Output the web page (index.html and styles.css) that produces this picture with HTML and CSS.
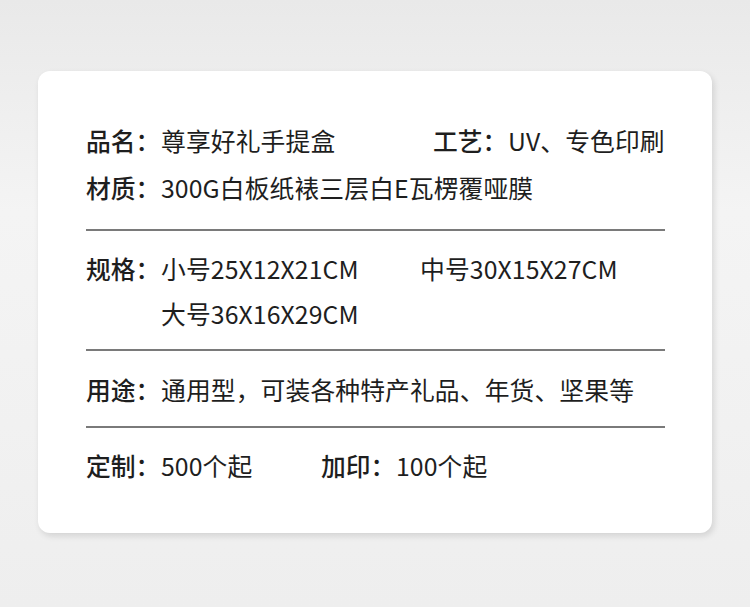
FILE: index.html
```html
<!DOCTYPE html>
<html lang="zh">
<head>
<meta charset="utf-8">
<link rel="stylesheet" href="styles.css">
</head>
<body>
<div class="card">
  <section class="sec sec1">
    <div class="row">
      <div class="item w-name"><span class="lbl">品名：</span><span class="val">尊享好礼手提盒</span></div>
      <div class="item"><span class="lbl">工艺：</span><span class="val">UV、专色印刷</span></div>
    </div>
    <div class="row">
      <div class="item"><span class="lbl">材质：</span><span class="val">300G白板纸裱三层白E瓦楞覆哑膜</span></div>
    </div>
  </section>
  <section class="sec sec2">
    <div class="row">
      <span class="lbl">规格：</span>
      <div class="vals">
        <div class="line"><span class="val w-size">小号25X12X21CM</span><span class="val">中号30X15X27CM</span></div>
        <div class="line"><span class="val">大号36X16X29CM</span></div>
      </div>
    </div>
  </section>
  <section class="sec sec3">
    <div class="row">
      <div class="item"><span class="lbl">用途：</span><span class="val">通用型，可装各种特产礼品、年货、坚果等</span></div>
    </div>
  </section>
  <section class="sec sec4">
    <div class="row">
      <div class="item w-order"><span class="lbl">定制：</span><span class="val">500个起</span></div>
      <div class="item"><span class="lbl">加印：</span><span class="val">100个起</span></div>
    </div>
  </section>
</div>
</body>
</html>
```
FILE: styles.css
```css
* { box-sizing: border-box; }
html, body { margin: 0; padding: 0; }
body {
  width: 750px;
  height: 607px;
  overflow: hidden;
  background: linear-gradient(180deg, #e9e9e9 0%, #f4f4f4 35%, #f1f1f1 70%, #eeeeee 100%);
  font-family: "Noto Sans CJK SC", "Noto Sans", sans-serif;
  color: #1e1e1e;
  padding-top: 71px;
  padding-left: 38px;
}
.card {
  width: 674px;
  height: 462px;
  background: #fff;
  border-radius: 12px;
  box-shadow: 2px 3px 6px rgba(0,0,0,0.12);
  padding: 0 47px 0 48px;
}
.sec { border-bottom: 2px solid #7a7a7a; }
.sec4 { border-bottom: none; }
.sec1 { padding: 46px 0 19px; }
.sec2 { padding: 14px 0 13px; }
.sec3 { padding: 15px 0 14px; }
.sec4 { padding: 14px 0 0; }
.sec1 .row + .row { margin-top: 1px; }
.row { display: flex; font-size: 24.8px; line-height: 46px; }
.item { display: flex; white-space: nowrap; }
.lbl { display: inline-block; width: 75px; font-weight: 500; flex: none; white-space: nowrap; }
.val { font-weight: 400; white-space: nowrap; letter-spacing: 0.1px; }
.w-name { width: 347px; }
.w-order { width: 235px; }
.vals { display: flex; flex-direction: column; }
.line { display: flex; }
.line + .line { margin-top: -1px; }
.w-size { width: 259px; }
```
